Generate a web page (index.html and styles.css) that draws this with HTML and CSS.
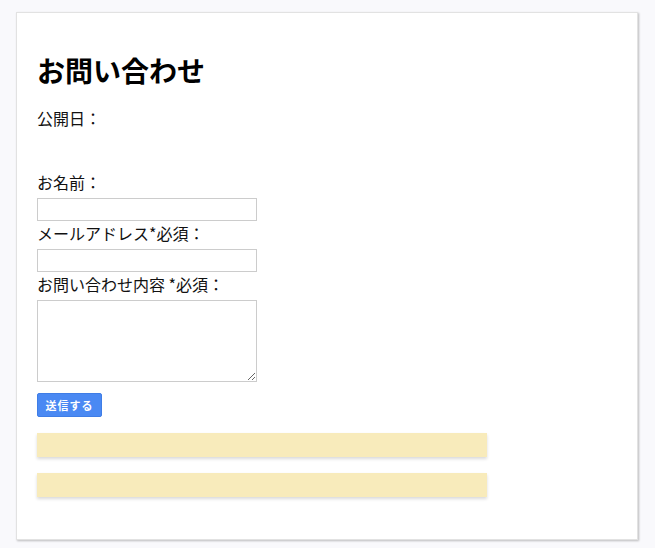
FILE: index.html
```html
<!DOCTYPE html>
<html>
<head>
    <meta name="viewport" content="width=device-width, initial-scale=1.0">
    <title>お問い合わせ</title>
    <link rel="stylesheet" href="styles.css">
</head>
<body>
    <div class="card">
        <h1>お問い合わせ</h1>
        <p class="date">公開日：</p>

        <form class="contact-form">
            <label for="name">お名前：</label>
            <input type="text" id="name">
            <label for="mail">メールアドレス*必須：</label>
            <input type="text" id="mail">
            <label for="body">お問い合わせ内容 *必須：</label>
            <textarea id="body"></textarea>
            <button type="button" class="send-button">送信する</button>
        </form>

        <!-- message boxes -->
        <div class="notice"></div>
        <div class="notice"></div>
    </div>
</body>
</html>
```

FILE: styles.css
```css
/* Reset some default styling */
body, html {
    margin: 0;
}

body {
    background-color: #f9f9fc;
    padding: 12px 17px 8px 16px;
    font-family: "Noto Sans CJK JP", "Noto Sans", sans-serif;
    color: #111;
}

/* White page card */
.card {
    background-color: #fff;
    border: 1px solid #e2e2e2;
    box-shadow: 1px 1px 2px rgba(0, 0, 0, 0.25);
    padding: 20px 20px 42px 20px;
}

h1 {
    font-size: 28px;
    font-weight: bold;
    line-height: 40px;
    margin: 17px 0 17px 0;
    color: #000;
}

.date {
    font-size: 16px;
    line-height: 22px;
    margin: 0 0 41px 0;
}

/* Contact form */
.contact-form {
    display: flex;
    flex-direction: column;
    align-items: flex-start;
}

.contact-form label {
    font-size: 16px;
    line-height: 24px;
}

.contact-form input[type="text"] {
    width: 220px;
    height: 23px;
    box-sizing: border-box;
    border: 1px solid #ccc;
    margin: 4px 0 0 0;
    padding: 0 4px;
}

.contact-form textarea {
    width: 220px;
    height: 82px;
    box-sizing: border-box;
    border: 1px solid #ccc;
    margin: 4px 0 0 0;
    resize: vertical;
}

.send-button {
    margin-top: 11px;
    width: 65px;
    height: 24px;
    background-color: #4a89f3;
    border: 1px solid #3f7de6;
    border-radius: 2px;
    color: #fff;
    font-family: "Noto Sans CJK JP", sans-serif;
    font-size: 11px;
    font-weight: bold;
    letter-spacing: 1px;
    padding: 0;
}

/* Yellow message boxes */
.notice {
    width: 450px;
    height: 24px;
    background-color: #f8ebbb;
    box-shadow: 0 2px 3px rgba(0, 0, 0, 0.15);
    margin-top: 16px;
}
```
